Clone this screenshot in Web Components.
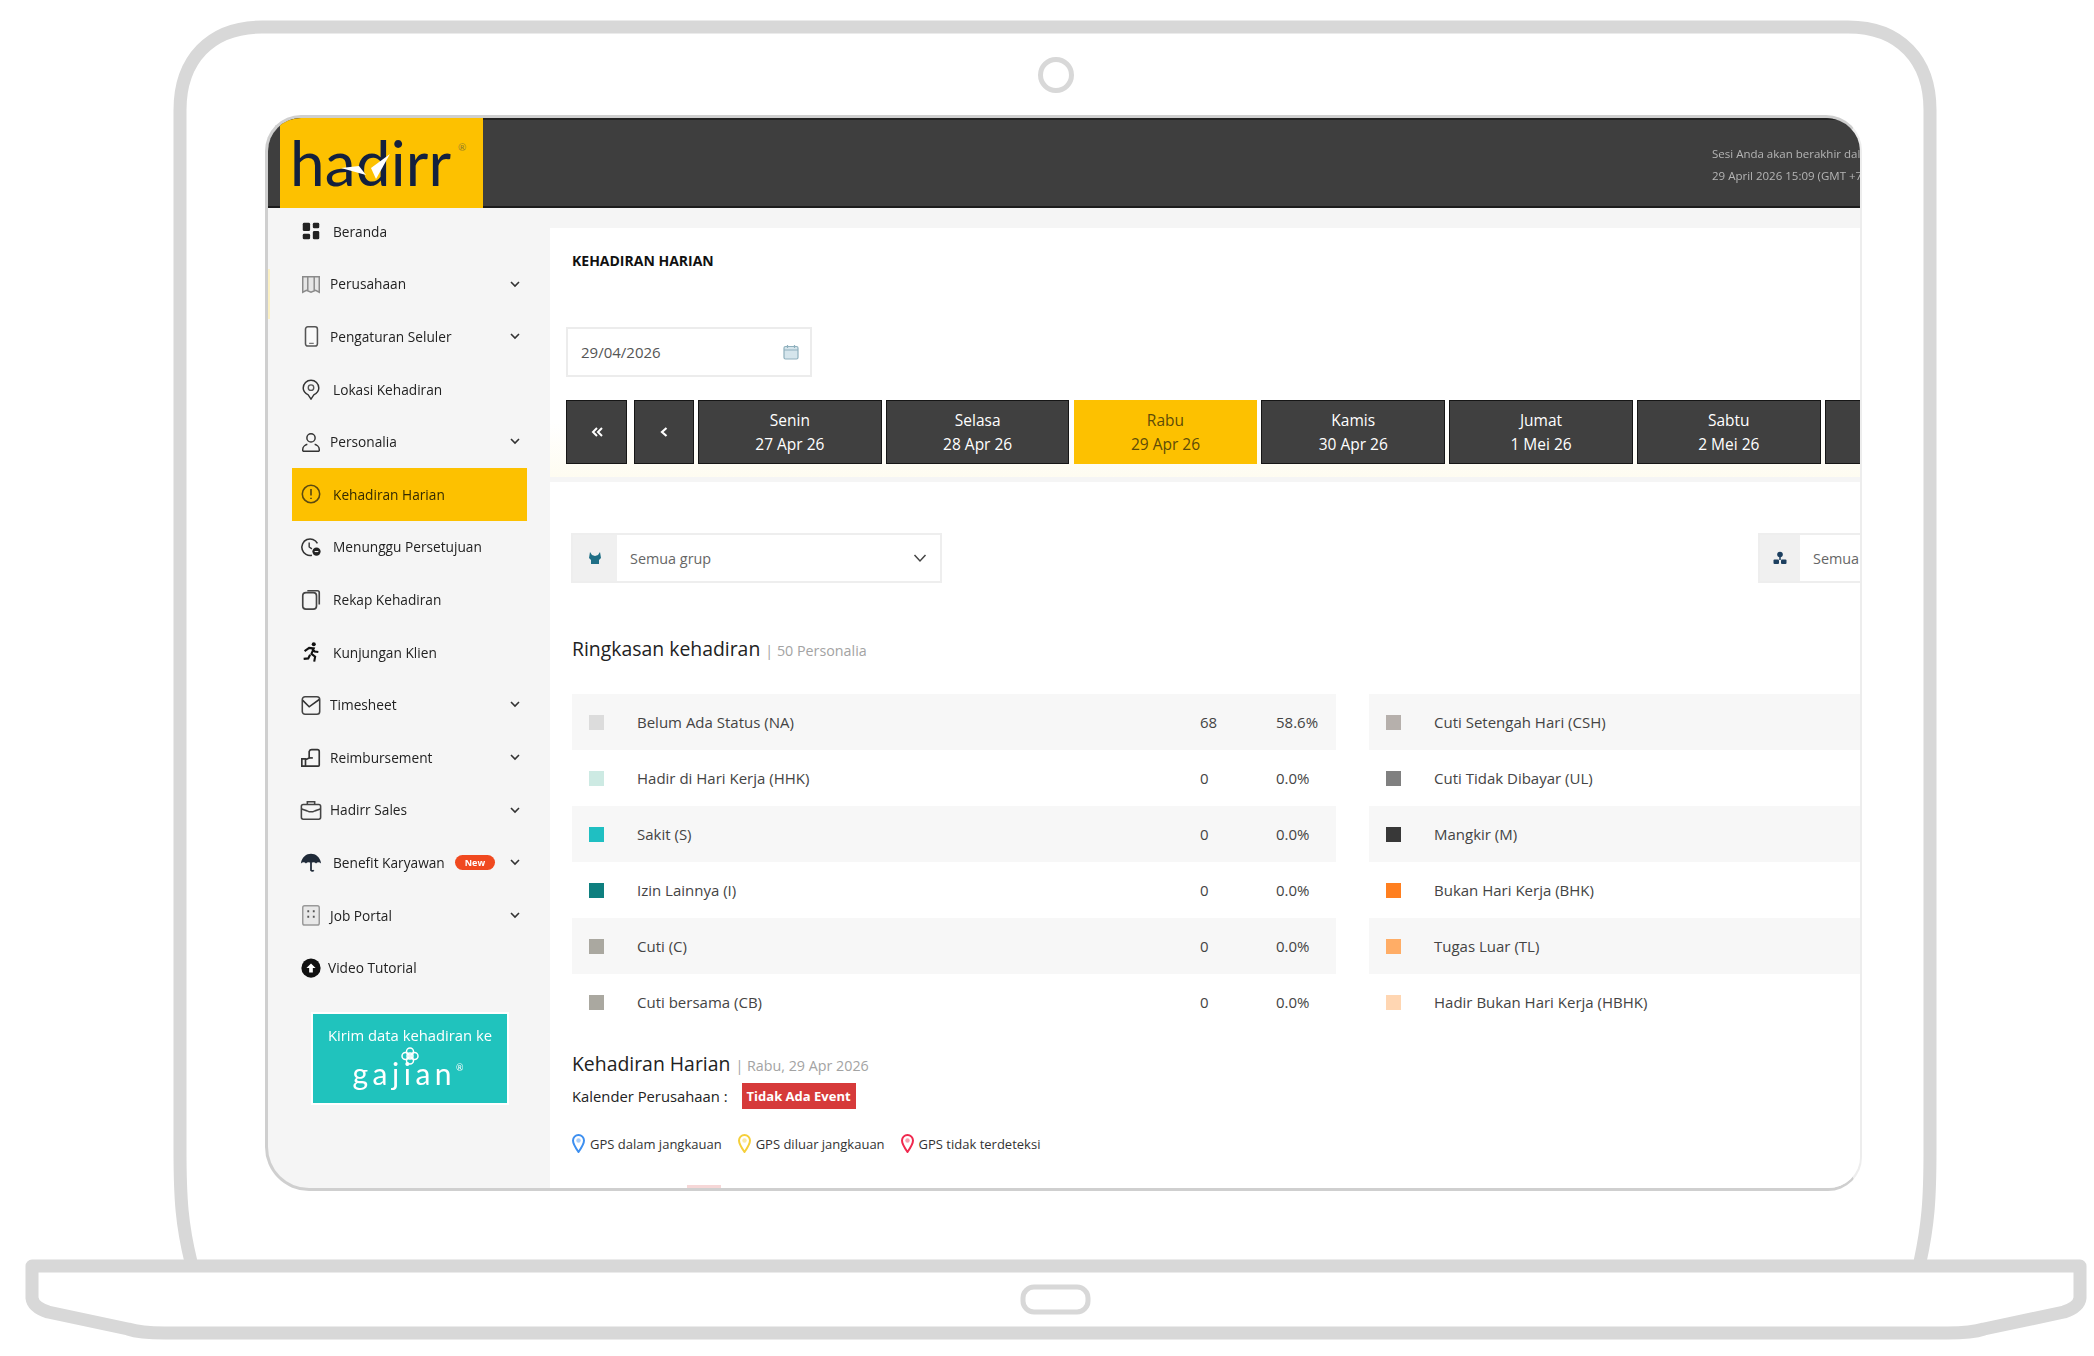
<!DOCTYPE html>
<html lang="id">
<head>
<meta charset="utf-8">
<title>Hadirr</title>
<style>
  html,body{margin:0;background:#fff;}
  body{width:2094px;height:1356px;overflow:hidden;font-family:"Open Sans","Noto Sans",sans-serif;color:#222;}
</style>
</head>
<body>
<laptop-frame>
  <hadirr-app>
    <app-header slot="header"></app-header>
    <side-nav slot="nav">
      <nav-item icon="home" style="--tx:11px">Beranda</nav-item>
      <nav-item icon="map" chevron marked>Perusahaan</nav-item>
      <nav-item icon="phone" chevron>Pengaturan Seluler</nav-item>
      <nav-item icon="pin" style="--tx:11px">Lokasi Kehadiran</nav-item>
      <nav-item icon="person" chevron>Personalia</nav-item>
      <nav-item icon="clock" active style="--tx:11px">Kehadiran Harian</nav-item>
      <nav-item icon="wait" style="--tx:11px">Menunggu Persetujuan</nav-item>
      <nav-item icon="clip" style="--tx:11px">Rekap Kehadiran</nav-item>
      <nav-item icon="run" style="--tx:11px">Kunjungan Klien</nav-item>
      <nav-item icon="sheet" chevron>Timesheet</nav-item>
      <nav-item icon="hand" chevron>Reimbursement</nav-item>
      <nav-item icon="case" chevron>Hadirr Sales</nav-item>
      <nav-item icon="umbrella" chevron badge="New" style="--tx:11px">Benefit Karyawan</nav-item>
      <nav-item icon="job" chevron>Job Portal</nav-item>
      <nav-item icon="video" style="--tx:6px">Video Tutorial</nav-item>
      <gajian-banner></gajian-banner>
    </side-nav>
    <date-card slot="top"></date-card>
    <summary-card slot="bottom"></summary-card>
  </hadirr-app>
</laptop-frame>

<script>
const ICONS = {
  home:'<rect x="3" y="3" width="8" height="9" rx="1.5" fill="#222"/><rect x="14" y="3" width="7" height="6" rx="1.5" fill="#222"/><rect x="3" y="15" width="8" height="6" rx="1.5" fill="#222"/><rect x="14" y="12" width="7" height="9" rx="1.5" fill="#222"/>',
  map:'<path d="M3 4h18v17l-4-2-5 2-5-2-4 2z" fill="#e6e6e6" stroke="#8a8a8a" stroke-width="1.6"/><path d="M8.5 4v15M15.5 4v15" stroke="#8a8a8a" stroke-width="1.6"/>',
  phone:'<rect x="6" y="2" width="13" height="21" rx="2.5" fill="#fafafa" stroke="#555" stroke-width="1.7"/><path d="M10 20h5" stroke="#777" stroke-width="1.4"/>',
  pin:'<path d="M12 23l-3-4.500C6 17 3.500 14.500 3.500 11A8.500 8.500 0 0 1 20.500 11c0 3.500-2.500 6-5.500 7.500z" fill="none" stroke="#333" stroke-width="1.6"/><circle cx="12" cy="10.500" r="3" fill="none" stroke="#555" stroke-width="1.5"/>',
  person:'<circle cx="12" cy="7.500" r="4.500" fill="none" stroke="#333" stroke-width="1.6"/><path d="M3 22v-2c0-3 3-5 5-5.500M21 22v-2c0-3-3-5-5-5.500M3 22h18" fill="none" stroke="#333" stroke-width="1.6"/>',
  clock:'<circle cx="12" cy="12" r="9.500" fill="none" stroke="#5b4a10" stroke-width="1.7"/><path d="M12 6.500v7M12 16v1.500" stroke="#5b4a10" stroke-width="1.8"/>',
  wait:'<path d="M19 8A9 9 0 1 0 13 21" fill="none" stroke="#333" stroke-width="1.7"/><path d="M10 7v5l3 2" fill="none" stroke="#333" stroke-width="1.5"/><circle cx="18" cy="17" r="4.500" fill="#222"/><path d="M16 17h4" stroke="#fff" stroke-width="1.100"/>',
  clip:'<rect x="3" y="5" width="15" height="18" rx="3.500" fill="none" stroke="#444" stroke-width="1.8"/><path d="M8 3h11a2 2 0 0 1 2 2v13" fill="none" stroke="#444" stroke-width="1.800"/>',
  run:'<circle cx="15" cy="3.500" r="2.200" fill="#111"/><path d="M5 11l5-3.500 5 .5-2.500 6 4 3-1 5.500M13 8l3 3.500 4 .5M11 15l-2 4-5 .5" fill="none" stroke="#111" stroke-width="2.300"/>',
  sheet:'<rect x="2.500" y="3" width="19" height="19" rx="3" fill="none" stroke="#444" stroke-width="1.700"/><path d="M3 7l7 7 4-3 7-5" fill="none" stroke="#333" stroke-width="1.700"/>',
  hand:'<path d="M2 14h4v8H2zM6 15l4-2V6a3 3 0 0 1 3-2h6a2 2 0 0 1 2 2v15a1 1 0 0 1-1 1H6" fill="none" stroke="#333" stroke-width="1.800"/><path d="M10 13h4" stroke="#333" stroke-width="1.800"/>',
  case:'<rect x="1.500" y="6" width="21" height="16" rx="2" fill="none" stroke="#444" stroke-width="1.700"/><path d="M8 6V3h8v3M2 11c3 1 5 2 6 2l2 1h4l2-1c1 0 3-1 6-2" fill="none" stroke="#444" stroke-width="1.700"/>',
  umbrella:'<path d="M1 13.500C2 6.500 7 3 12 3s10 3.500 11 10.500c-2-1.500-4-1.500-5.500 0-1.500-1.500-4-1.500-5.500 0-1.500-1.500-4-1.500-5.500 0-1.500-1.500-3.500-1.500-5.500 0z" fill="#1f2a38"/><path d="M12 13v8a2 2 0 0 0 3 0" fill="none" stroke="#1f2a38" stroke-width="1.900"/>',
  job:'<rect x="3" y="2" width="18" height="21" rx="2" fill="#e8e8e8" stroke="#999" stroke-width="1.600"/><path d="M8 8h2M14 8h2M8 14h2M14 14h2" stroke="#555" stroke-width="2.200"/>',
  video:'<circle cx="12" cy="12" r="10.500" fill="#111"/><path d="M7 12l5-5 5 5h-3v5h-4v-5z" fill="#fff"/>'
};

class LaptopFrame extends HTMLElement {
  constructor() {
    super();
    this.attachShadow({ mode: 'open' }).innerHTML = `
      <style>
        :host{display:block;position:relative;width:2094px;height:1356px;box-sizing:border-box;padding:115px 232px 0 265px;}
        svg{position:absolute;left:0;top:0;}
      </style>
      <svg width="2094" height="1356" fill="none" stroke="#d8d8d8">
        <path stroke-width="13" d="M191 1262C182 1225 180 1200 180 1150L180 110C180 60 210 27 262 27L1848 27C1900 27 1930 60 1930 110L1930 1150C1930 1200 1928 1225 1920 1262"/>
        <path stroke-width="13" stroke-linejoin="round" d="M32 1266L2080 1266L2080 1298Q2079 1307 2064 1312L1984 1329Q1972 1333 1947 1333L165 1333Q140 1333 128 1329L48 1312Q33 1307 32 1298Z"/>
        <rect x="1023" y="1287" width="65" height="25" rx="11" stroke-width="5"/>
        <circle cx="1056" cy="75" r="15.500" stroke-width="5"/>
      </svg>
      <slot></slot>
    `;
  }
}
customElements.define('laptop-frame', LaptopFrame);

class HadirrApp extends HTMLElement {
  constructor() {
    super();
    this.attachShadow({ mode: 'open' }).innerHTML = `
      <style>
        :host{display:grid;position:relative;box-sizing:border-box;width:1597px;height:1076px;overflow:hidden;
          grid-template-columns:282px 1fr;grid-template-rows:90px 1fr;filter:blur(.4px);
          background:#f5f5f5;border:solid #cfcfcf;border-width:3px 2px 3px 3px;border-right-color:#ededed;border-radius:36px 36px 34px 44px;}
        .head{grid-column:1 / 3;position:relative;z-index:1;}
        .main{padding-top:20px;display:flex;flex-direction:column;gap:5px;min-width:0;overflow:hidden;}
      </style>
      <div class="head"><slot name="header"></slot></div>
      <slot name="nav"></slot>
      <div class="main"><slot name="top"></slot><slot name="bottom"></slot></div>
    `;
  }
}
customElements.define('hadirr-app', HadirrApp);

class AppHeader extends HTMLElement {
  constructor() {
    super();
    this.attachShadow({ mode: 'open' }).innerHTML = `
      <style>
        :host{display:flex;box-sizing:border-box;height:90px;background:#3e3e3e;border-top:2px solid #222;border-bottom:2px solid #1c1c1c;padding-left:12px;}
        .logo{position:relative;box-sizing:border-box;width:203px;margin:-2px 0;background:#fdc100;padding:9px 0 0 10px;
          font:400 62px/70px Lato,sans-serif;color:#13203e;letter-spacing:.2px;}
        .logo sup{position:absolute;left:178px;top:24px;font:400 10px/1 Lato,sans-serif;color:#8d7a2c;letter-spacing:0;}
        .logo svg{position:absolute;left:48px;top:26px;}
        .sesi{margin-left:auto;width:148px;overflow:hidden;white-space:nowrap;font-size:11.500px;line-height:22px;color:#b5b5b5;padding-top:23px;}
      </style>
      <div class="logo">hadirr<sup>®</sup>
        <svg width="72" height="46" viewBox="0 0 72 46" fill="#fff"><path d="M13 24L31 22L38 31Z"/><path d="M62 10L43 24L48 35Z"/></svg>
      </div>
      <div class="sesi">Sesi Anda akan berakhir dalam<br>29 April 2026 15:09 (GMT +7)</div>
    `;
  }
}
customElements.define('app-header', AppHeader);

class SideNav extends HTMLElement {
  constructor() {
    super();
    this.attachShadow({ mode: 'open' }).innerHTML = `
      <style>
        :host{display:block;margin-top:-3px;padding-left:24px;width:235px;}
      </style>
      <slot></slot>
    `;
  }
}
customElements.define('side-nav', SideNav);

class NavItem extends HTMLElement {
  connectedCallback() {
    const icon = ICONS[this.getAttribute('icon')] || '';
    const chevron = this.hasAttribute('chevron')
      ? '<svg class="chev" width="12" height="12" viewBox="0 0 12 12"><path d="M2 4l4 4 4-4" fill="none" stroke="#333" stroke-width="1.600"/></svg>' : '';
    const badge = this.getAttribute('badge');
    this.attachShadow({ mode: 'open' }).innerHTML = `
      <style>
        :host{display:flex;position:relative;align-items:center;box-sizing:border-box;height:52.600px;padding-left:8px;font-size:13.700px;color:#222;white-space:nowrap;}
        :host([active]){background:#fdc100;color:#332a00;}
        :host([marked])::before{content:"";position:absolute;left:-24px;top:11px;width:2px;height:50px;background:#fbf0c4;}
        .ic{flex:none;width:22px;height:22px;margin-right:var(--tx,8px);}
        .chev{position:absolute;left:217px;top:20px;}
        .badge{margin-left:10px;background:#f0491f;color:#fff;font-size:9px;font-weight:700;line-height:15px;padding:0 10px;border-radius:8px;}
      </style>
      <svg class="ic" viewBox="0 0 24 24">${icon}</svg><slot></slot>${badge ? `<span class="badge">${badge}</span>` : ''}${chevron}
    `;
  }
}
customElements.define('nav-item', NavItem);

class GajianBanner extends HTMLElement {
  constructor() {
    super();
    this.attachShadow({ mode: 'open' }).innerHTML = `
      <style>
        :host{display:flex;flex-direction:column;align-items:center;box-sizing:border-box;width:194px;height:89px;margin:20px 0 0 21px;
          background:#20c3bd;color:#fff;padding-top:12px;box-shadow:0 0 0 2px #fff;}
        .t{font-size:14.800px;line-height:18px;white-space:nowrap;}
        svg{display:block;margin-top:2px;}
        .g{font:400 30px/24px Lato,sans-serif;margin:-5px 4px 0 0;letter-spacing:4.500px;}
        .g sup{font-size:9px;letter-spacing:0;vertical-align:14px;line-height:0;}
      </style>
      <div class="t">Kirim data kehadiran ke</div>
      <svg width="20" height="20" viewBox="0 0 20 20" fill="none" stroke="#fff" stroke-width="1.500"><circle cx="10" cy="10" r="3"/><circle cx="10" cy="5.500" r="3.500"/><circle cx="10" cy="14.500" r="3.500"/><circle cx="5.500" cy="10" r="3.500"/><circle cx="14.500" cy="10" r="3.500"/></svg>
      <div class="g">gajian<sup>®</sup></div>
    `;
  }
}
customElements.define('gajian-banner', GajianBanner);

class DayButton extends HTMLElement {
  constructor() {
    super();
    this.attachShadow({ mode: 'open' }).innerHTML = `
      <style>
        :host{display:flex;flex:none;flex-direction:column;align-items:center;justify-content:center;box-sizing:border-box;height:64px;width:var(--w,183.500px);
          background:#404040;border:1.500px solid #161616;color:#fff;font-size:15.500px;line-height:24px;}
        :host([today]){background:#fdc100;border-color:#fdc100;color:#5d4c08;}
      </style>
      <slot></slot>
    `;
  }
}
customElements.define('day-button', DayButton);

class DateCard extends HTMLElement {
  constructor() {
    super();
    this.attachShadow({ mode: 'open' }).innerHTML = `
      <style>
        :host{display:block;box-sizing:border-box;height:249px;padding:23px 0 0 16px;background:linear-gradient(#fff 78%,#fefcf1);}
        h1{margin:0 0 0 6px;font-size:14px;line-height:20px;font-weight:700;color:#111;}
        .date{display:flex;align-items:center;justify-content:space-between;box-sizing:border-box;width:246px;height:50px;margin-top:56px;padding:0 11px 0 13px;
          border:2px solid #ececec;font-size:15px;color:#555;}
        .strip{display:flex;gap:4.300px;margin-top:23px;}
        .first{margin-right:2.500px;}
      </style>
      <h1>KEHADIRAN HARIAN</h1>
      <div class="date"><span>29/04/2026</span>
        <svg width="16" height="16" viewBox="0 0 16 16"><rect x="1" y="2.500" width="14" height="12.500" rx="1.500" fill="#d5e5ec" stroke="#8fb0bd" stroke-width="1.200"/><path d="M1 6h14M4.500 1v3M11.500 1v3" stroke="#8fb0bd" stroke-width="1.200"/></svg>
      </div>
      <div class="strip">
        <day-button class="first" style="--w:61px">
          <svg width="14" height="12" viewBox="0 0 14 12" fill="none" stroke="#fff" stroke-width="2"><path d="M7 2L3 6l4 4M12 2L8 6l4 4"/></svg>
        </day-button>
        <day-button style="--w:60px">
          <svg width="10" height="12" viewBox="0 0 10 12" fill="none" stroke="#fff" stroke-width="2.200"><path d="M7.500 2L3 6l4.500 4"/></svg>
        </day-button>
        <day-button><span>Senin</span><span>27 Apr 26</span></day-button>
        <day-button><span>Selasa</span><span>28 Apr 26</span></day-button>
        <day-button today><span>Rabu</span><span>29 Apr 26</span></day-button>
        <day-button><span>Kamis</span><span>30 Apr 26</span></day-button>
        <day-button><span>Jumat</span><span>1 Mei 26</span></day-button>
        <day-button><span>Sabtu</span><span>2 Mei 26</span></day-button>
        <day-button><span>Minggu</span><span>3 Mei 26</span></day-button>
      </div>
    `;
  }
}
customElements.define('date-card', DateCard);

class FilterSelect extends HTMLElement {
  connectedCallback() {
    const tree = this.getAttribute('icon') !== 'group';
    const icon = tree
      ? '<circle cx="8" cy="4.500" r="2.800" fill="#1c3f5f"/><path d="M8 7v3" stroke="#1c3f5f" stroke-width="1.500"/><rect x="1.500" y="9.500" width="5.500" height="4.500" rx="1" fill="#1c3f5f"/><rect x="9" y="9.500" width="5.500" height="4.500" rx="1" fill="#1c3f5f"/>'
      : '<path d="M3 2l2 3 3 1 3-1 2-3 1 6-2 2v4H4v-4L2 8z" fill="#1f6f86"/>';
    this.attachShadow({ mode: 'open' }).innerHTML = `
      <style>
        :host{display:flex;align-items:center;box-sizing:border-box;width:371px;height:50px;border:2px solid #eeeeee;background:#fff;font-size:14.400px;color:#666;}
        .add{display:flex;align-items:center;justify-content:center;flex:none;width:${tree ? 40 : 44}px;height:100%;background:#f0f0f0;margin-right:13px;}
        .sel{flex:1;white-space:nowrap;}
        .chev{margin-right:13px;}
      </style>
      <span class="add"><svg width="16" height="16" viewBox="0 0 16 16">${icon}</svg></span>
      <span class="sel"><slot></slot></span>
      <svg class="chev" width="14" height="14" viewBox="0 0 14 14"><path d="M1.500 4l5.500 6 5.500-6" fill="none" stroke="#444" stroke-width="1.500"/></svg>
    `;
  }
}
customElements.define('filter-select', FilterSelect);

class SummaryRow extends HTMLElement {
  connectedCallback() {
    const color = this.getAttribute('color');
    this.attachShadow({ mode: 'open' }).innerHTML = `
      <style>
        :host{display:grid;grid-template-columns:65px 563px 76px 1fr;align-items:center;height:56px;font-size:15px;color:#444;}
        :host(:nth-child(odd)){background:#f7f7f7;}
        i{display:block;width:15px;height:15px;margin-left:17px;background:${color};}
      </style>
      <i></i><span><slot></slot></span><span>${this.getAttribute('n') || ''}</span><span>${this.getAttribute('p') || ''}</span>
    `;
  }
}
customElements.define('summary-row', SummaryRow);

class SectionTitle extends HTMLElement {
  constructor() {
    super();
    this.attachShadow({ mode: 'open' }).innerHTML = `
      <style>
        :host{display:block;font-size:19.400px;line-height:26px;color:#222;white-space:nowrap;}
        small{font-size:14.300px;color:#a3a3a3;margin-left:5px;}
      </style>
      <slot></slot><small>| <slot name="sub"></slot></small>
    `;
  }
}
customElements.define('section-title', SectionTitle);

class GpsKey extends HTMLElement {
  connectedCallback() {
    this.attachShadow({ mode: 'open' }).innerHTML = `
      <style>
        :host{display:inline-flex;align-items:center;gap:5px;font-size:13px;color:#333;white-space:nowrap;}
      </style>
      <svg width="13" height="19" viewBox="0 0 13 19"><path d="M6.500 18C3 13 1 10 1 6.500a5.500 5.500 0 0 1 11 0C12 10 10 13 6.500 18z" fill="none" stroke="${this.getAttribute('color')}" stroke-width="2"/><circle cx="6.500" cy="6.500" r="2.200" fill="${this.getAttribute('color')}" opacity=".45"/></svg>
      <span><slot></slot></span>
    `;
  }
}
customElements.define('gps-key', GpsKey);

class SummaryCard extends HTMLElement {
  constructor() {
    super();
    const rows = (list) => list.map(r =>
      `<summary-row color="${r[1]}" n="${r[2] || ''}" p="${r[3] || ''}">${r[0]}</summary-row>`).join('');
    this.attachShadow({ mode: 'open' }).innerHTML = `
      <style>
        :host{display:block;position:relative;box-sizing:border-box;flex:1;background:#fff;padding:51px 0 0 22px;}
        .filters{display:flex;justify-content:space-between;width:1558px;margin-left:-1px;}
        section-title{margin-top:53px;}
        .cols{display:grid;grid-template-columns:764px 764px;gap:33px;margin:30px 0 0;}
        .cal{display:flex;align-items:center;margin-top:4px;font-size:14.800px;color:#222;white-space:nowrap;}
        .ev{margin-left:14px;background:#d63a3a;color:#fff;font-weight:700;line-height:26px;padding:0 5px;font-size:13px;}
        .keys{display:flex;gap:16px;margin-top:25px;}
        .peek{position:absolute;left:137px;bottom:0;width:34px;height:3px;background:#f6d7d7;}
        .k2{margin-top:21px;}
      </style>
      <div class="filters">
        <filter-select icon="group">Semua grup</filter-select>
        <filter-select icon="tree">Semua jabatan</filter-select>
      </div>
      <section-title>Ringkasan kehadiran<span slot="sub">50 Personalia</span></section-title>
      <div class="cols">
        <div>${rows([
          ['Belum Ada Status (NA)','#dcdcdc','68','58.6%'],
          ['Hadir di Hari Kerja (HHK)','#cdeae3','0','0.0%'],
          ['Sakit (S)','#1fbfc2','0','0.0%'],
          ['Izin Lainnya (I)','#0e7f7f','0','0.0%'],
          ['Cuti (C)','#aaa8a0','0','0.0%'],
          ['Cuti bersama (CB)','#aaa8a0','0','0.0%']
        ])}</div>
        <div>${rows([
          ['Cuti Setengah Hari (CSH)','#b6b0ac'],
          ['Cuti Tidak Dibayar (UL)','#808080'],
          ['Mangkir (M)','#383838'],
          ['Bukan Hari Kerja (BHK)','#ff7f1f'],
          ['Tugas Luar (TL)','#ffad66'],
          ['Hadir Bukan Hari Kerja (HBHK)','#ffd6b2']
        ])}</div>
      </div>
      <section-title class="k2">Kehadiran Harian<span slot="sub">Rabu, 29 Apr 2026</span></section-title>
      <div class="cal">Kalender Perusahaan :<span class="ev">Tidak Ada Event</span></div>
      <div class="keys">
        <gps-key color="#3d8ff0">GPS dalam jangkauan</gps-key>
        <gps-key color="#f5cf3a">GPS diluar jangkauan</gps-key>
        <gps-key color="#f0284e">GPS tidak terdeteksi</gps-key>
      </div>
      <div class="peek"></div>
    `;
  }
}
customElements.define('summary-card', SummaryCard);
</script>
</body>
</html>
